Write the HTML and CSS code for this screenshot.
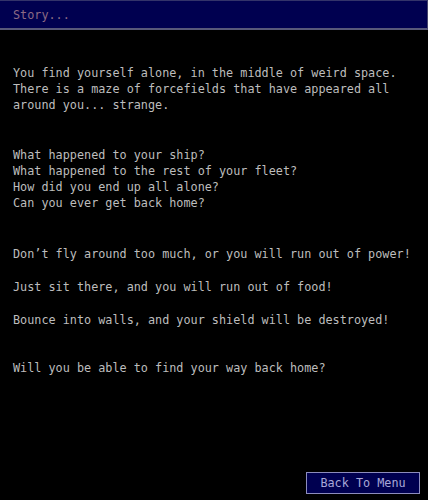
FILE: index.html
```html
<!DOCTYPE html>
<html>
<head>
<meta charset="utf-8">
<link rel="stylesheet" href="styles.css">
</head>
<body>
<div class="screen">
  <div class="titlebar"><span class="title">Story...</span></div>
  <div class="story">
    <div class="block b1">
      <div>You find yourself alone, in the middle of weird space.</div>
      <div>There is a maze of forcefields that have appeared all</div>
      <div>around you... strange.</div>
    </div>
    <div class="block b2">
      <div>What happened to your ship?</div>
      <div>What happened to the rest of your fleet?</div>
      <div>How did you end up all alone?</div>
      <div>Can you ever get back home?</div>
    </div>
    <div class="block b3">
      <p>Don’t fly around too much, or you will run out of power!</p>
      <p>Just sit there, and you will run out of food!</p>
      <p>Bounce into walls, and your shield will be destroyed!</p>
    </div>
    <div class="block b4">
      <div>Will you be able to find your way back home?</div>
    </div>
  </div>
  <div class="footer">
    <button class="btn">Back To Menu</button>
  </div>
</div>
</body>
</html>
```
FILE: styles.css
```css
html, body {
  margin: 0;
  padding: 0;
  background: #000;
}
.screen {
  width: 428px;
  height: 500px;
  display: flex;
  flex-direction: column;
  font-family: "DejaVu Sans Mono", "Liberation Mono", monospace;
  font-size: 11.8px;
  line-height: 16px;
  color: #bdbdbd;
}
.titlebar {
  flex-shrink: 0;
  height: 27px;
  background: #000050;
  border-top: 1px solid #33336a;
  border-bottom: 2px solid #58587a;
  border-right: 1px solid #44446a;
  display: flex;
  align-items: center;
  padding-left: 13px;
}
.title {
  color: #8c6a84;
  padding-top: 1px;
}
.story {
  flex-shrink: 0;
  padding: 35px 0 0 13px;
  white-space: nowrap;
}
.block p {
  margin: 0 0 17px 0;
}
.b2 { margin-top: 34px; }
.b3 { margin-top: 35px; }
.b4 { margin-top: 32px; }
.footer {
  margin-top: auto;
  display: flex;
  justify-content: flex-end;
  padding: 0 8px 6px 0;
}
.btn {
  width: 114px;
  height: 22px;
  background: #000050;
  border: 1px solid #8c8cbc;
  color: #a8a8d8;
  font: inherit;
  padding: 0;
  line-height: 20px;
}
```
